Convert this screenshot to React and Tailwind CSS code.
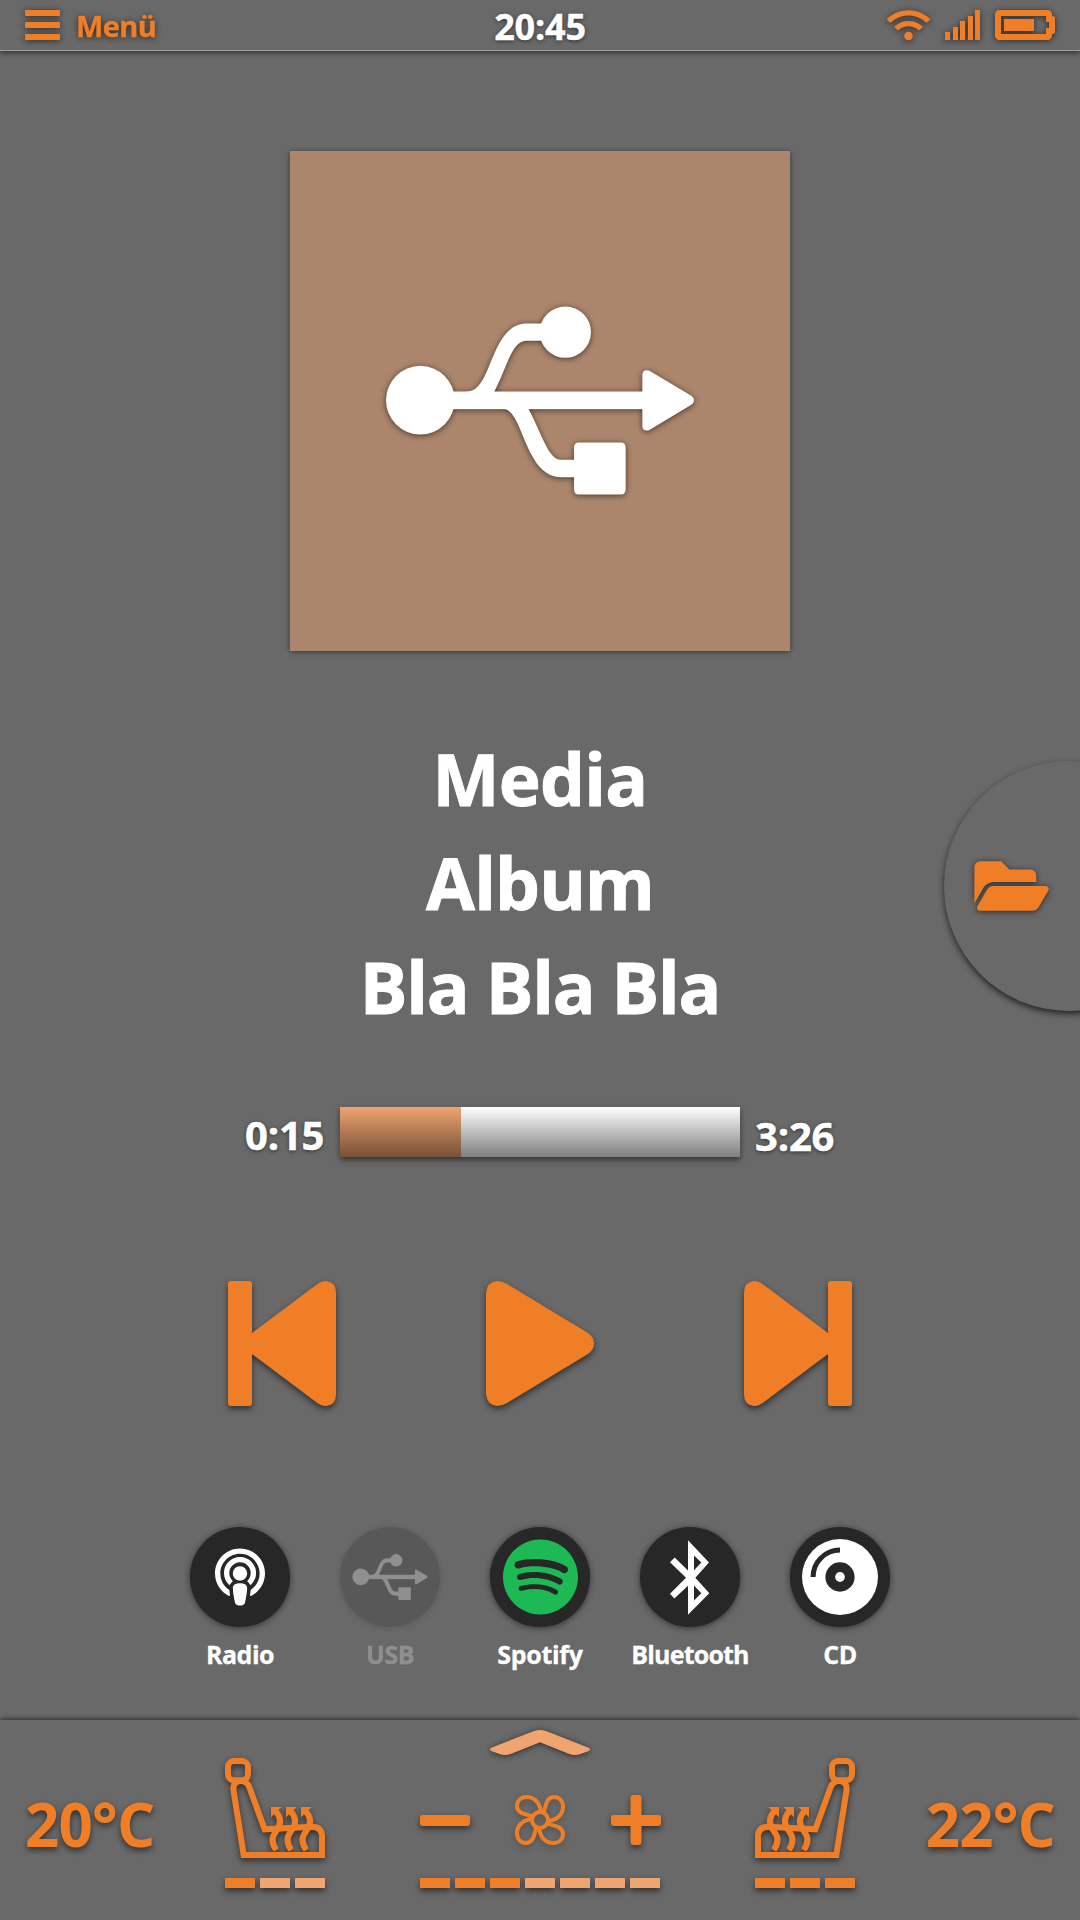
import { FaPodcast, FaSpotify, FaFolderOpen, FaWifi, FaBatteryThreeQuarters } from "react-icons/fa";

const glow = "drop-shadow-[0_1px_3px_rgba(0,0,0,0.6)]";
const lift = "drop-shadow-[0_3px_3px_rgba(0,0,0,0.55)]";

function UsbIcon({ className }) {
  return (
    <svg viewBox="78 80 924 566" className={className} fill="currentColor">
      <circle cx="181" cy="362" r="103" />
      <circle cx="616" cy="158" r="77" />
      <rect x="642" y="489" width="155" height="156" rx="14" />
      <rect x="250" y="336" width="610" height="53" />
      <path d="M847 285Q848 272 860 272Q866 272 872 276L994 349Q1002 355 1002 362Q1002 370 994 376L872 449Q866 453 860 453Q848 453 847 440Z" />
      <path d="M290 338C340 340 350 330 370 298C400 245 420 132 500 132H560V184H500C455 184 445 256 402 338Z" />
      <path d="M425 387C450 387 462 410 475 437C505 505 530 593 605 593H660V541H603C565 541 545 462 505 387Z" />
    </svg>
  );
}

function BluetoothIcon() {
  return (
    <svg viewBox="390 91 120 224" className="h-[75px] w-[40px]" fill="currentColor">
      <path
        fillRule="evenodd"
        d="M444 91L507 158L466 204L508 250L444 315V228L403 266L390 252L438 204L390 157L404 143L444 182ZM462 137V181L484 158ZM462 227V272L484 250Z"
      />
    </svg>
  );
}

function CdIcon() {
  return (
    <svg viewBox="787 87 226 226" className="size-[76px]">
      <circle cx="900" cy="200" r="113" fill="#fff" />
      <circle cx="900" cy="200" r="29" fill="none" stroke="#272727" strokeWidth="29" />
      <path d="M820 200A80 80 0 0 1 900 120" fill="none" stroke="#272727" strokeWidth="15" />
    </svg>
  );
}

function SkipIcon({ className }) {
  return (
    <svg viewBox="0 0 108 125" className={className} fill="#f07e26">
      <rect width="24" height="125" rx="3" />
      <path d="M24 52L88 4Q93 0 98 0Q108 1 108 12V113Q108 124 98 125Q93 125 88 121L24 73L14 62Z" />
    </svg>
  );
}

function PlayIcon() {
  return (
    <svg viewBox="0 0 108 125" className={`h-[125px] w-[108px] ${lift}`} fill="#f07e26">
      <path d="M0 12Q1 1 11 0Q16 0 21 3L102 52Q108 56 108 62.500Q108 69 102 73L21 122Q16 125 11 125Q1 124 0 113Z" />
    </svg>
  );
}

function SeatIcon({ className }) {
  return (
    <svg viewBox="675 174 300 300" className={`size-[100px] ${className}`} fill="none" stroke="#f07e26" strokeWidth="18">
      <rect x="684" y="183" width="60" height="58" rx="18" />
      <path d="M731 465L700 268Q700 243 723 242Q741 243 748 262L794 388L935 380Q966 380 966 410V465Z" />
      {[0, 45, 90].map((x) => (
        <g key={x} transform={`translate(${x} 0)`}>
          <path d="M829 450C814 430 815 410 828 394C844 374 845 354 827 334" />
          <path d="M813 321H845L813 352Z" fill="#f07e26" stroke="none" />
        </g>
      ))}
    </svg>
  );
}

function FanIcon() {
  return (
    <svg viewBox="405 285 150 150" className="size-[50px] drop-shadow-[0_3px_3px_rgba(0,0,0,0.2)]" fill="none" stroke="#f07e26" strokeWidth="12">
      <circle cx="480" cy="360" r="24" />
      {["rotate(0 480 360)", "rotate(90 480 360)", "rotate(180 480 360)", "rotate(270 480 360)"].map((t) => (
        <path key={t} transform={t} d="M482 334C480 308 462 291 441 291C421 291 411 304 411 319C412 339 432 342 458 349" />
      ))}
    </svg>
  );
}

function Levels({ on, total }) {
  return (
    <div className={`flex gap-[5px] ${lift}`}>
      {Array.from({ length: total }, (_, i) => (
        <div key={i} className={`h-[10px] w-[30px] ${i < on ? "bg-[#f07e26]" : "bg-[#f0a470]"}`} />
      ))}
    </div>
  );
}

function Source({ label, children, off, tracking }) {
  return (
    <div className={`flex w-[150px] flex-col items-center ${off ? "opacity-25" : ""}`}>
      <div className="flex size-[100px] items-center justify-center rounded-full bg-[#272727] text-white shadow-[0_1px_6px_rgba(0,0,0,0.55)]">
        {children}
      </div>
      <span className={`mt-[10px] text-[25px] leading-[34px] [-webkit-text-stroke:0.300px] ${tracking}`}>{label}</span>
    </div>
  );
}

function Header() {
  return (
    <header className="grid h-[51px] grid-cols-3 border-b border-[#a0a0a0] px-[25px] shadow-[0_2px_5px_rgba(0,0,0,0.55)]">
      <div className={`flex h-[50px] items-center text-[#f07e26] ${glow}`}>
        <div className="flex flex-col gap-[6px]">
          <div className="h-[6px] w-[35px] rounded-[1px] bg-current" />
          <div className="h-[6px] w-[35px] rounded-[1px] bg-current" />
          <div className="h-[6px] w-[35px] rounded-[1px] bg-current" />
        </div>
        <span className="ml-[16px] mt-[2px] text-[29px] leading-[40px] tracking-[-0.6px] [-webkit-text-stroke:0.400px]">Menü</span>
      </div>
      <div className="pt-[2px] text-center text-[36px] leading-[50px] tracking-[-0.2px] [-webkit-text-stroke:0.400px] [text-shadow:0_1px_4px_rgba(0,0,0,0.6)]">20:45</div>
      <div className={`flex h-[50px] items-center justify-end text-[#f07e26] ${glow}`}>
        <FaWifi className="mr-[15px] h-[34.400px] w-[43px]" />
        <div className="mr-[15px] flex h-[30px] items-end gap-[2.500px]">
          <div className="h-[8px] w-[5px] bg-current" />
          <div className="h-[13px] w-[5px] bg-current" />
          <div className="h-[19px] w-[5px] bg-current" />
          <div className="h-[24px] w-[5px] bg-current" />
          <div className="h-[30px] w-[5px] bg-current" />
        </div>
        <FaBatteryThreeQuarters className="h-[48px] w-[60px]" />
      </div>
    </header>
  );
}

export default function App() {
  return (
    <div className="flex h-[1920px] w-[1080px] flex-col overflow-hidden bg-[#696969] font-['Open_Sans','Noto_Sans',sans-serif] font-bold text-white">
      <Header />
      <main className="relative flex flex-1 flex-col items-center">
        <div className="mt-[100px] flex size-[500px] items-center justify-center bg-[#ac866c] shadow-[0_1px_5px_rgba(0,0,0,0.5)]">
          <UsbIcon className={`mb-px h-[189px] w-[308px] ${glow}`} />
        </div>
        <div className="mt-[76px] text-center text-[71px] leading-[104px] [-webkit-text-stroke:0.900px]">
          <div className="tracking-[-0.7px]">Media</div>
          <div className="tracking-[-0.8px]">Album</div>
          <div className="tracking-[-1.2px]">Bla Bla Bla</div>
        </div>
        <div className="mt-[68px] flex h-[50px] w-full items-center justify-center gap-[15px] text-[40px] leading-[50px] [-webkit-text-stroke:0.500px] [text-shadow:0_1px_4px_rgba(0,0,0,0.6)]">
          <span className="w-[80px] pr-px pt-[5px] text-right tracking-[-0.2px]">0:15</span>
          <div className="flex h-[50px] w-[400px] bg-linear-to-b from-white to-[#808080] shadow-[0_3px_6px_rgba(0,0,0,0.5)]">
            <div className="w-[121px] bg-linear-to-b from-[#f0a470] to-[#785238]" />
          </div>
          <span className="w-[80px] pt-[7px] tracking-[-0.2px]">3:26</span>
        </div>
        <div className="mt-[124px] flex gap-[150px]">
          <SkipIcon className={`h-[125px] w-[108px] ${lift}`} />
          <PlayIcon />
          <SkipIcon className="h-[125px] w-[108px] -scale-x-100 drop-shadow-[0_3px_3px_rgba(0,0,0,0.55)]" />
        </div>
        <div className="mt-[121px] flex">
          <Source label="Radio" tracking="tracking-[-0.5px]"><FaPodcast className="h-[58px] w-[50px]" /></Source>
          <Source label="USB" off tracking="tracking-[-0.5px]"><UsbIcon className="h-[46px] w-[76px]" /></Source>
          <Source label="Spotify" tracking="tracking-[-0.3px]"><FaSpotify className="h-[78px] w-[75px] text-[#1db954]" /></Source>
          <Source label="Bluetooth" tracking="tracking-[-0.8px]"><BluetoothIcon /></Source>
          <Source label="CD" tracking="tracking-[-0.5px]"><CdIcon /></Source>
        </div>
        <div className="absolute right-0 top-[700px] h-[280px] w-[150px] overflow-hidden">
          <div className="ml-[14px] mt-[10px] flex size-[250px] items-center rounded-full bg-[#696969] pl-[30px] shadow-[0_3px_6px_rgba(0,0,0,0.65)]">
            <FaFolderOpen className={`h-[66px] w-[75px] text-[#f07e26] ${glow}`} />
          </div>
        </div>
      </main>
      <footer className="flex h-[200px] justify-center shadow-[0_-1px_5px_rgba(0,0,0,0.6)]">
        <div className={`w-[225px] pl-[25px] pt-[64px] text-[60px] leading-[80px] tracking-[-0.8px] text-[#f07e26] ${lift}`}>20°C</div>
        <div className="flex w-[100px] flex-col gap-[20px] pt-[38px]">
          <SeatIcon className={lift} />
          <Levels on={1} total={3} />
        </div>
        <div className="mx-[95px] flex w-[240px] flex-col items-center pt-[10px]">
          <svg viewBox="330 90 300 75" className={`h-[25px] w-[100px] ${glow}`} fill="#f0a470">
            <path d="M462 93Q480 87 498 93L626 143Q634 148 626 153L602 162Q585 168 568 162L480 127L392 162Q375 168 358 162L334 153Q326 148 334 143Z" />
          </svg>
          <div className="mt-[40px] flex h-[50px] w-full items-center justify-between">
            <div className={`h-[11px] w-[50px] rounded-[3px] bg-[#f07e26] ${lift}`} />
            <FanIcon />
            <svg viewBox="0 0 50 50" className={`h-[50px] w-[50px] translate-x-px ${lift}`} fill="#f07e26">
              <rect y="20" width="50" height="11" rx="3" />
              <rect x="19.500" width="11" height="50" rx="3" />
            </svg>
          </div>
          <div className="mt-[33px]"><Levels on={3} total={7} /></div>
        </div>
        <div className="flex w-[100px] flex-col gap-[20px] pt-[38px]">
          <SeatIcon className={`-scale-x-100 ${lift}`} />
          <Levels on={3} total={3} />
        </div>
        <div className={`w-[225px] pr-[25px] pt-[64px] text-right text-[60px] leading-[80px] tracking-[-0.8px] text-[#f07e26] ${lift}`}>22°C</div>
      </footer>
    </div>
  );
}
